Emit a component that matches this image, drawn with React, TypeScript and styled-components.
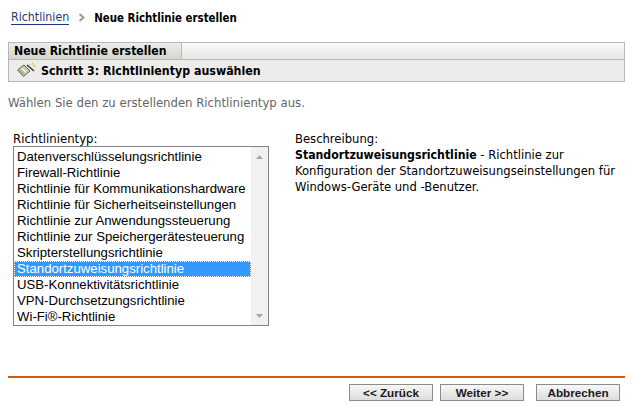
import React from 'react'
import styled, { createGlobalStyle } from 'styled-components'

const GlobalStyle = createGlobalStyle`
  html, body {
    margin: 0;
    padding: 0;
    background: #fff;
  }
`

const policyTypes = [
  'Datenverschlüsselungsrichtlinie',
  'Firewall-Richtlinie',
  'Richtlinie für Kommunikationshardware',
  'Richtlinie für Sicherheitseinstellungen',
  'Richtlinie zur Anwendungssteuerung',
  'Richtlinie zur Speichergerätesteuerung',
  'Skripterstellungsrichtlinie',
  'Standortzuweisungsrichtlinie',
  'USB-Konnektivitätsrichtlinie',
  'VPN-Durchsetzungsrichtlinie',
  'Wi-Fi®-Richtlinie',
]

const App = () => {
  return (
    <StPage>
      <GlobalStyle />
      {/* Breadcrumb */}
      <StCrumbs>
        <StCrumbLink>Richtlinien</StCrumbLink>
        <svg width="7" height="9" viewBox="0 0 7 9">
          <path d="M1.5 1 L5.5 4.5 L1.5 8" fill="none" stroke="#9a9a9a" strokeWidth="2" />
        </svg>
        <StCrumbCurrent>Neue Richtlinie erstellen</StCrumbCurrent>
      </StCrumbs>

      {/* Header */}
      <StPanel>
        <StTabRow>
          <StTab>Neue Richtlinie erstellen</StTab>
        </StTabRow>
        <StStepRow>
          <svg width="20" height="17" viewBox="0 0 20 17">
            <path d="M1.5 8 L8 3 L14 9 L7.5 14.5 Z" fill="#c9c9b4" stroke="#66665a" strokeWidth="1" />
            <path d="M3.5 8 L8 12.5" stroke="#85857a" strokeWidth="1" />
            <path d="M6 6.5 L10 10" stroke="#f6f6ee" strokeWidth="1.4" />
            <path d="M11 3 L18 9" stroke="#333" strokeWidth="1.4" />
            <path d="M13 2 L14 3 M16 0.5 L17 2.5 M17 4 L19.5 3.5" stroke="#e6cb35" strokeWidth="1.3" />
          </svg>
          <StStepTitle>Schritt 3: Richtlinientyp auswählen</StStepTitle>
        </StStepRow>
      </StPanel>

      <StIntro>Wählen Sie den zu erstellenden Richtlinientyp aus.</StIntro>

      {/* Type list + description */}
      <StColumns>
        <StListColumn>
          <StLabel>Richtlinientyp:</StLabel>
          <StListBox>
            <StOptions>
              {policyTypes.map((el) => (
                <StOption key={el} $selected={el === 'Standortzuweisungsrichtlinie'}>{el}</StOption>
              ))}
            </StOptions>
            <StScrollbar>
              <svg width="7" height="4" viewBox="0 0 7 4"><path d="M3.5 0 L7 4 H0 Z" fill="#a8a8a8" /></svg>
              <svg width="7" height="4" viewBox="0 0 7 4"><path d="M0 0 H7 L3.5 4 Z" fill="#a8a8a8" /></svg>
            </StScrollbar>
          </StListBox>
        </StListColumn>
        <StDescription>
          <div>Beschreibung:</div>
          <div><StStrong>Standortzuweisungsrichtlinie</StStrong> - Richtlinie zur Konfiguration der Standortzuweisungseinstellungen für Windows-Geräte und -Benutzer.</div>
        </StDescription>
      </StColumns>

      {/* Footer */}
      <StFooter>
        <StButton>&lt;&lt; Zurück</StButton>
        <StButton>Weiter &gt;&gt;</StButton>
        <StCancelButton>Abbrechen</StCancelButton>
      </StFooter>
    </StPage>
  )
}

const StPage = styled.div`
  width: 640px;
  height: 414px;
  overflow: hidden;
  box-sizing: border-box;
  padding: 10px 8px 0;
  font-family: "DejaVu Sans Condensed", "DejaVu Sans", Verdana, sans-serif;
  font-stretch: condensed;
  font-size: 13px;
  color: #000;
`

// Breadcrumb
const StCrumbs = styled.div`
  display: flex;
  align-items: center;
  gap: 9px;
  height: 15px;
  padding-left: 3px;
`
const StCrumbLink = styled.span`
  color: #1c3a78;
  border-bottom: 1px solid #1c3a78;
  font-size: 12.3px;
`
const StCrumbCurrent = styled.span`
  font-size: 11.4px;
  font-weight: bold;
`

// Header
const StPanel = styled.div`
  width: 617px;
  box-sizing: border-box;
  margin-top: 17px;
  border: 1px solid #b9b9b2;
`
const StTabRow = styled.div`
  display: flex;
  height: 16px;
  border-bottom: 1px solid #b9b9b2;
  background: linear-gradient(#fafafa, #e6e6e6);
`
const StTab = styled.div`
  box-sizing: border-box;
  width: 173px;
  padding-left: 5px;
  line-height: 16px;
  font-size: 12.2px;
  font-weight: bold;
  background: linear-gradient(#ececea, #d6d6d0);
  border-right: 1px solid #b9b9b2;
`
const StStepRow = styled.div`
  display: flex;
  align-items: center;
  gap: 5px;
  height: 21px;
  padding-left: 7px;
  background: #ececea;
`
const StStepTitle = styled.span`
  font-size: 12.3px;
  font-weight: bold;
`
const StIntro = styled.div`
  margin-top: 13px;
  line-height: 16px;
  color: #666;
`

// Type list + description
const StColumns = styled.div`
  display: flex;
  margin-top: 21px;
  padding-left: 5px;
`
const StListColumn = styled.div`
  width: 256px;
`
const StLabel = styled.div`
  line-height: 13px;
`
const StListBox = styled.div`
  box-sizing: border-box;
  display: flex;
  width: 256px;
  height: 180px;
  margin-top: 1px;
  border: 1px solid #82828c;
  background: #fff;
`
const StOptions = styled.div`
  flex: 1;
  padding-top: 2px;
  font-family: "Liberation Sans", Arial, sans-serif;
  font-stretch: normal;
  font-size: 13.2px;
`
const StOption = styled.div<{ $selected: boolean }>`
  box-sizing: border-box;
  height: 16px;
  line-height: 15px;
  padding-left: 3px;
  color: ${(p) => (p.$selected ? '#fff' : '#000')};
  background: ${(p) => (p.$selected ? '#3399ff' : 'transparent')};
  outline: ${(p) => (p.$selected ? '1px dotted #fff' : 'none')};
  outline-offset: -1px;
`
const StScrollbar = styled.div`
  display: flex;
  flex-direction: column;
  justify-content: space-between;
  align-items: center;
  width: 17px;
  padding: 8px 0 7px;
  box-sizing: border-box;
  background: #f1f1f1;
`
const StDescription = styled.div`
  width: 330px;
  margin: -1px 0 0 26px;
  line-height: 16px;
  font-size: 12.9px;
`
const StStrong = styled.strong`
  font-size: 12.2px;
`

// Footer
const StFooter = styled.div`
  display: flex;
  justify-content: flex-end;
  gap: 7px;
  width: 617px;
  box-sizing: border-box;
  margin-top: 50px;
  padding: 6px 5px 0 0;
  border-top: 2px solid #d4561a;
`
const StButton = styled.div`
  box-sizing: border-box;
  width: 84px;
  height: 17px;
  line-height: 15px;
  text-align: center;
  font-family: "Liberation Sans", Arial, sans-serif;
  font-stretch: normal;
  font-size: 11.7px;
  font-weight: bold;
  color: #1a1a1a;
  border: 1px solid #8c8c8c;
  background: linear-gradient(#f8f8f8, #dcdcdc);
`
const StCancelButton = styled(StButton)`
  margin-left: 5px;
`

export default App
